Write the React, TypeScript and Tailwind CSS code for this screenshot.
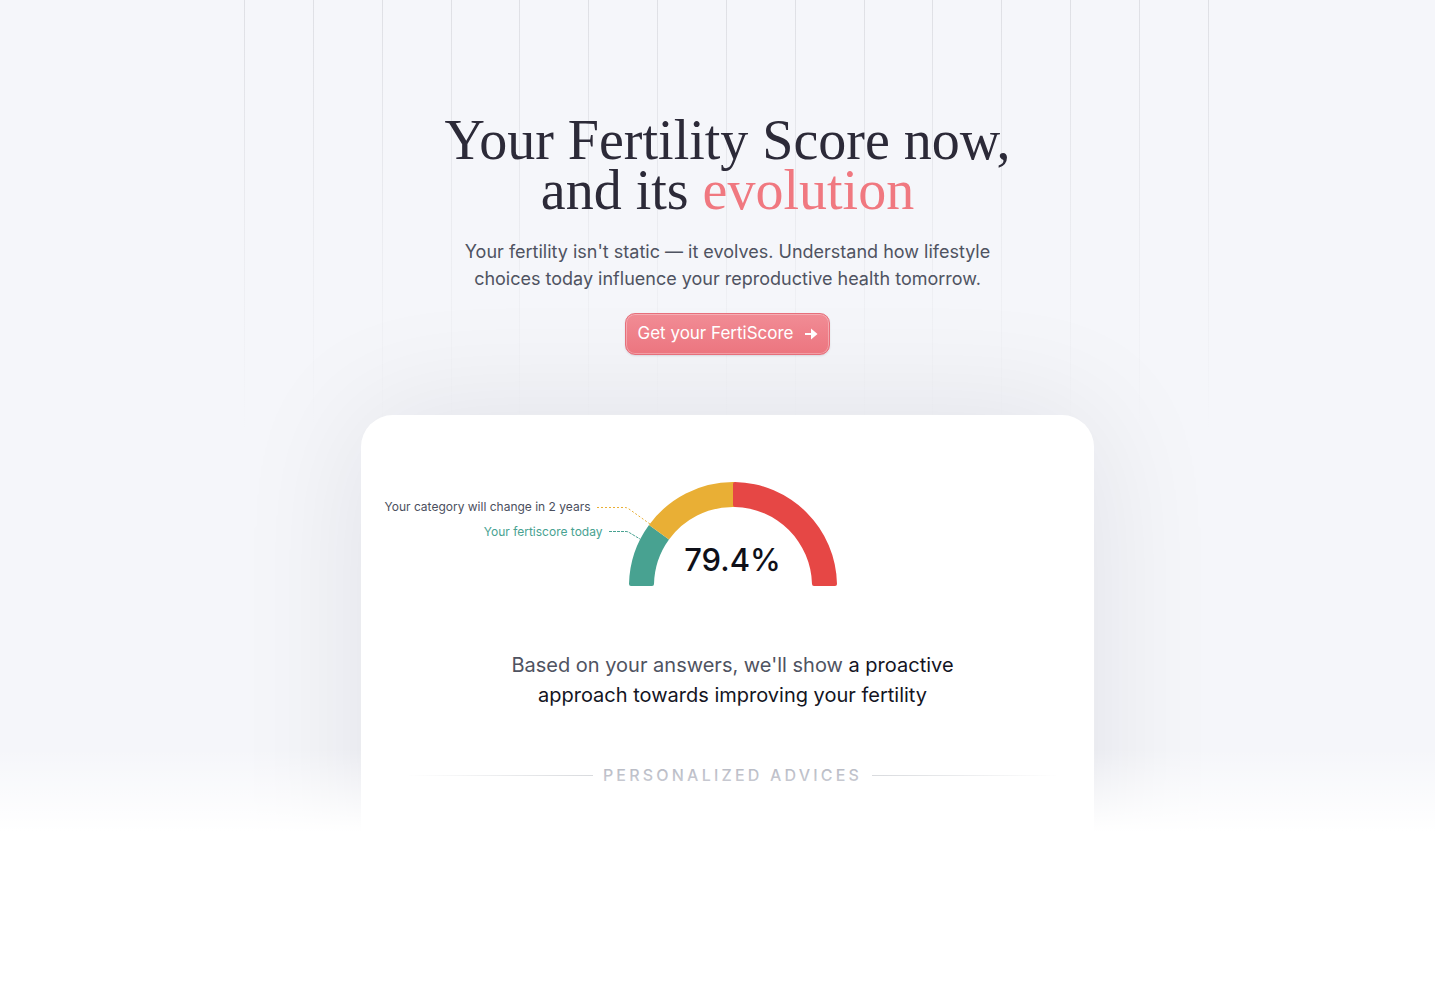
import React from 'react';

const GRID_LINES = Array.from({ length: 15 }, (_, index) => index);

interface GaugeSegment {
  id: string;
  color: string;
  d: string;
}

const GAUGE_SEGMENTS: GaugeSegment[] = [
  {
    id: 'good',
    color: '#48a291',
    d: 'M0 102 A104 104 0 0 1 20 43 L40 57.5 A79 79 0 0 0 25 102 Q25 104 23 104 H2 Q0 104 0 102 Z',
  },
  {
    id: 'medium',
    color: '#e9af35',
    d: 'M20 43 A104 104 0 0 1 104 0 H107 V25 H104 A79 79 0 0 0 40 57.5 Z',
  },
  {
    id: 'low',
    color: '#e64745',
    d: 'M106 0 A104 104 0 0 1 208 102 Q208 104 206 104 H185 Q183 104 183 102 A79 79 0 0 0 106 25 Q104 25 104 23 V2 Q104 0 106 0 Z',
  },
];

function GridLines() {
  return (
    <div className="absolute inset-x-0 top-0 pl-[18px]" aria-hidden="true">
      <div className="mx-auto flex h-[430px] max-w-[965px] justify-between">
        {GRID_LINES.map((line) => (
          <div key={line} className="w-px bg-gradient-to-b from-[#dfe0e5] to-transparent" />
        ))}
      </div>
    </div>
  );
}

function ScoreGauge() {
  return (
    <div className="grid grid-cols-[minmax(0,1fr)_208px_minmax(0,1fr)]">
      {/* Callouts */}
      <div className="flex flex-col items-end pt-3 text-[12px] leading-[25px] whitespace-nowrap">
        <div className="-mr-[22px] flex gap-[6px]">
          <span className="text-[#4b4f5e]">Your category will change in 2 years</span>
          <svg className="h-[25px] w-[54px] overflow-visible" fill="none" stroke="#e9af35" strokeDasharray="2 2">
            <path d="M0 13.5 H28 Q30 13.5 32 15 L53 30" />
          </svg>
        </div>
        <div className="-mr-[12px] flex gap-[6px]">
          <span className="text-[#48a291]">Your fertiscore today</span>
          <svg className="h-[25px] w-[32px] overflow-visible" fill="none" stroke="#48a291" strokeDasharray="3 1">
            <path d="M0 12.5 H17 Q19 12.5 21 14 L31 20" />
          </svg>
        </div>
      </div>

      {/* Half circle */}
      <div className="grid">
        <svg viewBox="0 0 208 104" className="col-start-1 row-start-1 w-full" aria-hidden="true">
          {GAUGE_SEGMENTS.map((segment) => (
            <path key={segment.id} d={segment.d} fill={segment.color} />
          ))}
        </svg>
        <p className="col-start-1 row-start-1 self-end pb-[6px] text-center text-[31px] leading-10 font-medium text-[#0f1019]">
          79.4%
        </p>
      </div>
    </div>
  );
}

function ScoreCard() {
  return (
    <div className="mx-auto mt-[60px] h-[500px] max-w-[733px] rounded-[32px] bg-white pt-[67px] pl-[10px] shadow-[0_0_130px_rgba(20,20,35,0.09)]">
      <ScoreGauge />
      <p className="mx-auto mt-16 max-w-[460px] text-center text-[20px] leading-[30px] text-[#4f5361]">
        Based on your answers, we'll show{' '}
        <span className="text-[#14151f]">a proactive approach towards improving your fertility</span>
      </p>
      <div className="mt-[53px] flex items-center justify-center gap-[10px] px-9">
        <div className="h-px flex-1 bg-gradient-to-r from-transparent to-[#c6c9ce]" />
        <h2 className="text-[16px] leading-6 font-medium tracking-[0.2em] text-[#a3a6b3]">PERSONALIZED ADVICES</h2>
        <div className="h-px flex-1 bg-gradient-to-r from-[#c6c9ce] to-transparent" />
      </div>
    </div>
  );
}

export default function App() {
  return (
    <main className="min-h-screen bg-white font-['Inter',sans-serif]">
      <section className="relative h-[832px] overflow-hidden bg-[#f5f6fa]">
        <GridLines />

        <div className="relative pt-[115px] pl-5">
          <h1 className="text-center font-['Liberation_Serif',serif] text-[56px] leading-[50px] text-[#2c2a38]">
            Your Fertility Score now,
            <br />
            and its <span className="text-[#f07880]">evolution</span>
          </h1>
          <p className="mx-auto mt-[23px] max-w-[560px] text-center text-[18px] leading-[27px] text-[#4f5361]">
            Your fertility isn't static — it evolves. Understand how lifestyle choices today influence your
            reproductive health tomorrow.
          </p>
          <div className="mt-[21px] flex justify-center">
            <button
              type="button"
              className="flex h-[42px] items-center gap-[11px] rounded-[10px] border border-[#e76f7b] bg-gradient-to-b from-[#f18c95] to-[#ec757f] px-[11px] text-[17px] text-white shadow-[inset_0_0_0_1px_rgba(255,255,255,0.3),0_1px_2px_rgba(30,30,60,0.12)]"
            >
              Get your FertiScore
              <svg viewBox="0 0 13 12" className="h-3 w-[13px]" fill="currentColor" aria-hidden="true">
                <path d="M0 5h6V0.6L12.5 6 6 11.4V7H0z" />
              </svg>
            </button>
          </div>

          <ScoreCard />
        </div>

        <div className="pointer-events-none absolute inset-x-0 bottom-0 h-[84px] bg-gradient-to-b from-transparent to-white" />
      </section>
    </main>
  );
}
